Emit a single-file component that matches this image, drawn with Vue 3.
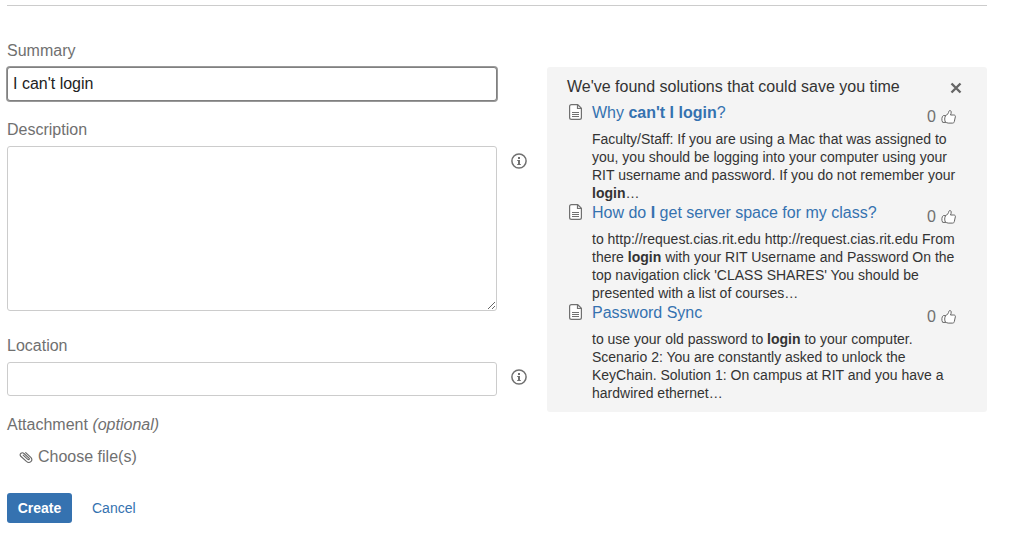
<script setup>
import { ref } from 'vue'

const summary = ref("I can't login")
const description = ref('')
const location = ref('')

const solutions = ref([
  {
    title: [{ t: 'Why ' }, { t: "can't I login", b: true }, { t: '?' }],
    body: [
      { t: 'Faculty/Staff: If you are using a Mac that was assigned to you, you should be logging into your computer using your RIT username and password. If you do not remember your ' },
      { t: 'login', b: true },
      { t: '…' }
    ],
    votes: 0
  },
  {
    title: [{ t: 'How do ' }, { t: 'I', b: true }, { t: ' get server space for my class?' }],
    body: [
      { t: 'to http://request.cias.rit.edu http://request.cias.rit.edu From there ' },
      { t: 'login', b: true },
      { t: " with your RIT Username and Password On the top navigation click 'CLASS SHARES' You should be presented with a list of courses…" }
    ],
    votes: 0
  },
  {
    title: [{ t: 'Password Sync' }],
    body: [
      { t: 'to use your old password to ' },
      { t: 'login', b: true },
      { t: ' to your computer. Scenario 2: You are constantly asked to unlock the KeyChain. Solution 1: On campus at RIT and you have a hardwired ethernet…' }
    ],
    votes: 0
  }
])
</script>

<template>
  <main class="page">
    <div class="columns">
      <form class="form" @submit.prevent>
        <div class="field">
          <label for="summary">Summary</label>
          <div class="control">
            <input id="summary" v-model="summary" class="active" type="text" />
          </div>
        </div>

        <div class="field tall">
          <label for="description">Description</label>
          <div class="control">
            <textarea id="description" v-model="description"></textarea>
            <button class="info" type="button" aria-label="About description">
              <svg viewBox="0 0 16 16" width="16" height="16">
                <circle cx="8" cy="8" r="7.1" fill="none" stroke="#707070" stroke-width="1.500" />
                <path d="M7 4h2v2H7zM6.200 7H9v4h.8v1H6.200v-1H7V8h-.8z" fill="#707070" />
              </svg>
            </button>
          </div>
        </div>

        <div class="field">
          <label for="location">Location</label>
          <div class="control">
            <input id="location" v-model="location" type="text" />
            <button class="info" type="button" aria-label="About location">
              <svg viewBox="0 0 16 16" width="16" height="16">
                <circle cx="8" cy="8" r="7.1" fill="none" stroke="#707070" stroke-width="1.500" />
                <path d="M7 4h2v2H7zM6.200 7H9v4h.8v1H6.200v-1H7V8h-.8z" fill="#707070" />
              </svg>
            </button>
          </div>
        </div>

        <div class="attachment">
          <label for="choose">Attachment <em>(optional)</em></label>
          <button id="choose" class="choose" type="button">
            <svg viewBox="0 0 14 14" width="14" height="14">
              <path
                d="M4.200 5.200 8.800 9.400C9.800 10.200 10.900 9 10 8.100L5 3.500C3 1.800.2 3.800 1.500 6L7.400 11.400C10.600 14.200 14.600 10.500 11.800 7.400L6.700 2.700"
                fill="none" stroke="#666" stroke-width="1.100" stroke-linecap="round" stroke-linejoin="round"
              />
            </svg>
            Choose file(s)
          </button>
        </div>

        <div class="actions">
          <button class="create" type="submit">Create</button>
          <a class="cancel" href="#">Cancel</a>
        </div>
      </form>

      <aside class="solutions">
        <header class="heading">
          <h2>We've found solutions that could save you time</h2>
          <button class="close" type="button" aria-label="Close">
            <svg viewBox="0 0 12 12" width="12" height="12">
              <path d="m1.500 1.500 9 9M10.500 1.500l-9 9" fill="none" stroke="#666" stroke-width="2.400" />
            </svg>
          </button>
        </header>
        <ul>
          <li v-for="(s, i) in solutions" :key="i">
            <svg class="doc" viewBox="0 0 13 16" width="13" height="16">
              <path
                d="M2.500.6H8.700L12.400 4.300V13.500a1.900 1.900 0 0 1-1.900 1.900h-8A1.900 1.900 0 0 1 .6 13.500v-11A1.900 1.900 0 0 1 2.500.6zM8.500.8v3.700h3.700"
                fill="#fff" stroke="#707070" stroke-width="1.200"
              />
              <path d="M3 8.500h7M3 10.500h7M3 12.500h7" stroke="#707070" stroke-width="1" />
            </svg>
            <div class="entry">
              <div class="top">
                <a href="#"><template v-for="(p, k) in s.title" :key="k"><strong v-if="p.b">{{ p.t }}</strong><template v-else>{{ p.t }}</template></template></a>
                <button class="vote" type="button" aria-label="Helpful">
                  {{ s.votes }}
                  <svg viewBox="0 0 15 14" width="15" height="14">
                    <path
                      d="M4.300 5.800C6.300 5 7.500 3.300 8 1.100c.3-1 2-.7 2.200.6.1 1-.2 2.200-.7 3.300h3.300c1.400 0 1.800 1 1.500 2l-1 4.600c-.2 1-.8 1.500-1.700 1.500H7.200c-1.100 0-1.700-.8-2.900-.8M4.600 5.600H2.300C.7 6.600.3 10.200 1.700 12.400h2.900C3.400 10.600 3.400 7.600 4.600 5.600z"
                      fill="#fff" stroke="#666" stroke-width="1" stroke-linejoin="round"
                    />
                  </svg>
                </button>
              </div>
              <p><template v-for="(p, k) in s.body" :key="k"><strong v-if="p.b">{{ p.t }}</strong><template v-else>{{ p.t }}</template></template></p>
            </div>
          </li>
        </ul>
      </aside>
    </div>
  </main>
</template>

<style>
body {
  background: #fff;
}
</style>

<style scoped>
.page {
  padding: 5px 30px 24px 7px;
  font-family: "Liberation Sans", Arial, sans-serif;
  font-size: 16px;
  line-height: 20px;
  color: #707070;
}

.page * {
  box-sizing: border-box;
}

button {
  padding: 0;
  border: 0;
  background: none;
  color: inherit;
  font: inherit;
  cursor: pointer;
}

svg {
  display: block;
  flex: none;
}

a {
  color: #3572b0;
  text-decoration: none;
}

.columns {
  display: grid;
  grid-template-columns: minmax(0, 1fr) 440px;
  align-items: start;
  border-top: 1px solid #ccc;
}

.form {
  padding-top: 35px;
}

.field {
  margin-bottom: 19px;
}

.field.tall {
  margin-bottom: 25px;
}

label {
  display: block;
  margin-bottom: 6px;
}

.control {
  display: flex;
  align-items: flex-start;
  padding-right: 50px;
}

input,
textarea {
  display: block;
  flex: 1;
  min-width: 0;
  height: 34px;
  margin: 0;
  padding: 4px 5px;
  border: 1px solid #ccc;
  border-radius: 3px;
  outline: 0;
  background: #fff;
  color: #222;
  font: inherit;
}

textarea {
  height: 165px;
  resize: vertical;
}

.active {
  border-color: #808080;
  box-shadow: 0 0 0 1px #999;
}

.info {
  margin: 7px -30px 0 14px;
}

.choose {
  display: flex;
  align-items: center;
  gap: 5px;
  margin: 12px 0 26px 12px;
}

.actions {
  display: flex;
  align-items: center;
  gap: 20px;
  font-size: 14px;
}

.create {
  height: 30px;
  min-width: 65px;
  padding: 0 10px;
  border-radius: 3px;
  background: #3572b0;
  color: #fff;
  font-weight: bold;
}

.solutions {
  margin-top: 61px;
  padding: 10px 30px 10px 20px;
  border-radius: 3px;
  background: #f4f4f4;
  color: #333;
}

.heading {
  display: flex;
  align-items: center;
  justify-content: space-between;
  margin-bottom: 5px;
}

h2 {
  margin: 0;
  font-size: 16px;
  font-weight: normal;
}

.close {
  margin: 2px -5px 0 0;
}

ul {
  margin: 0;
  padding: 0;
  list-style: none;
}

li {
  display: flex;
  gap: 10px;
  padding-left: 2px;
}

.doc {
  margin-top: 2px;
}

.entry {
  flex: 1;
  min-width: 0;
}

.top {
  display: flex;
  justify-content: space-between;
  height: 28px;
  line-height: 22px;
}

.vote {
  display: flex;
  align-items: center;
  gap: 5px;
  height: 20px;
  margin: 5px 1px 0 0;
  color: #707070;
}

p {
  margin: 0;
  font-size: 14px;
  line-height: 18px;
}
</style>
